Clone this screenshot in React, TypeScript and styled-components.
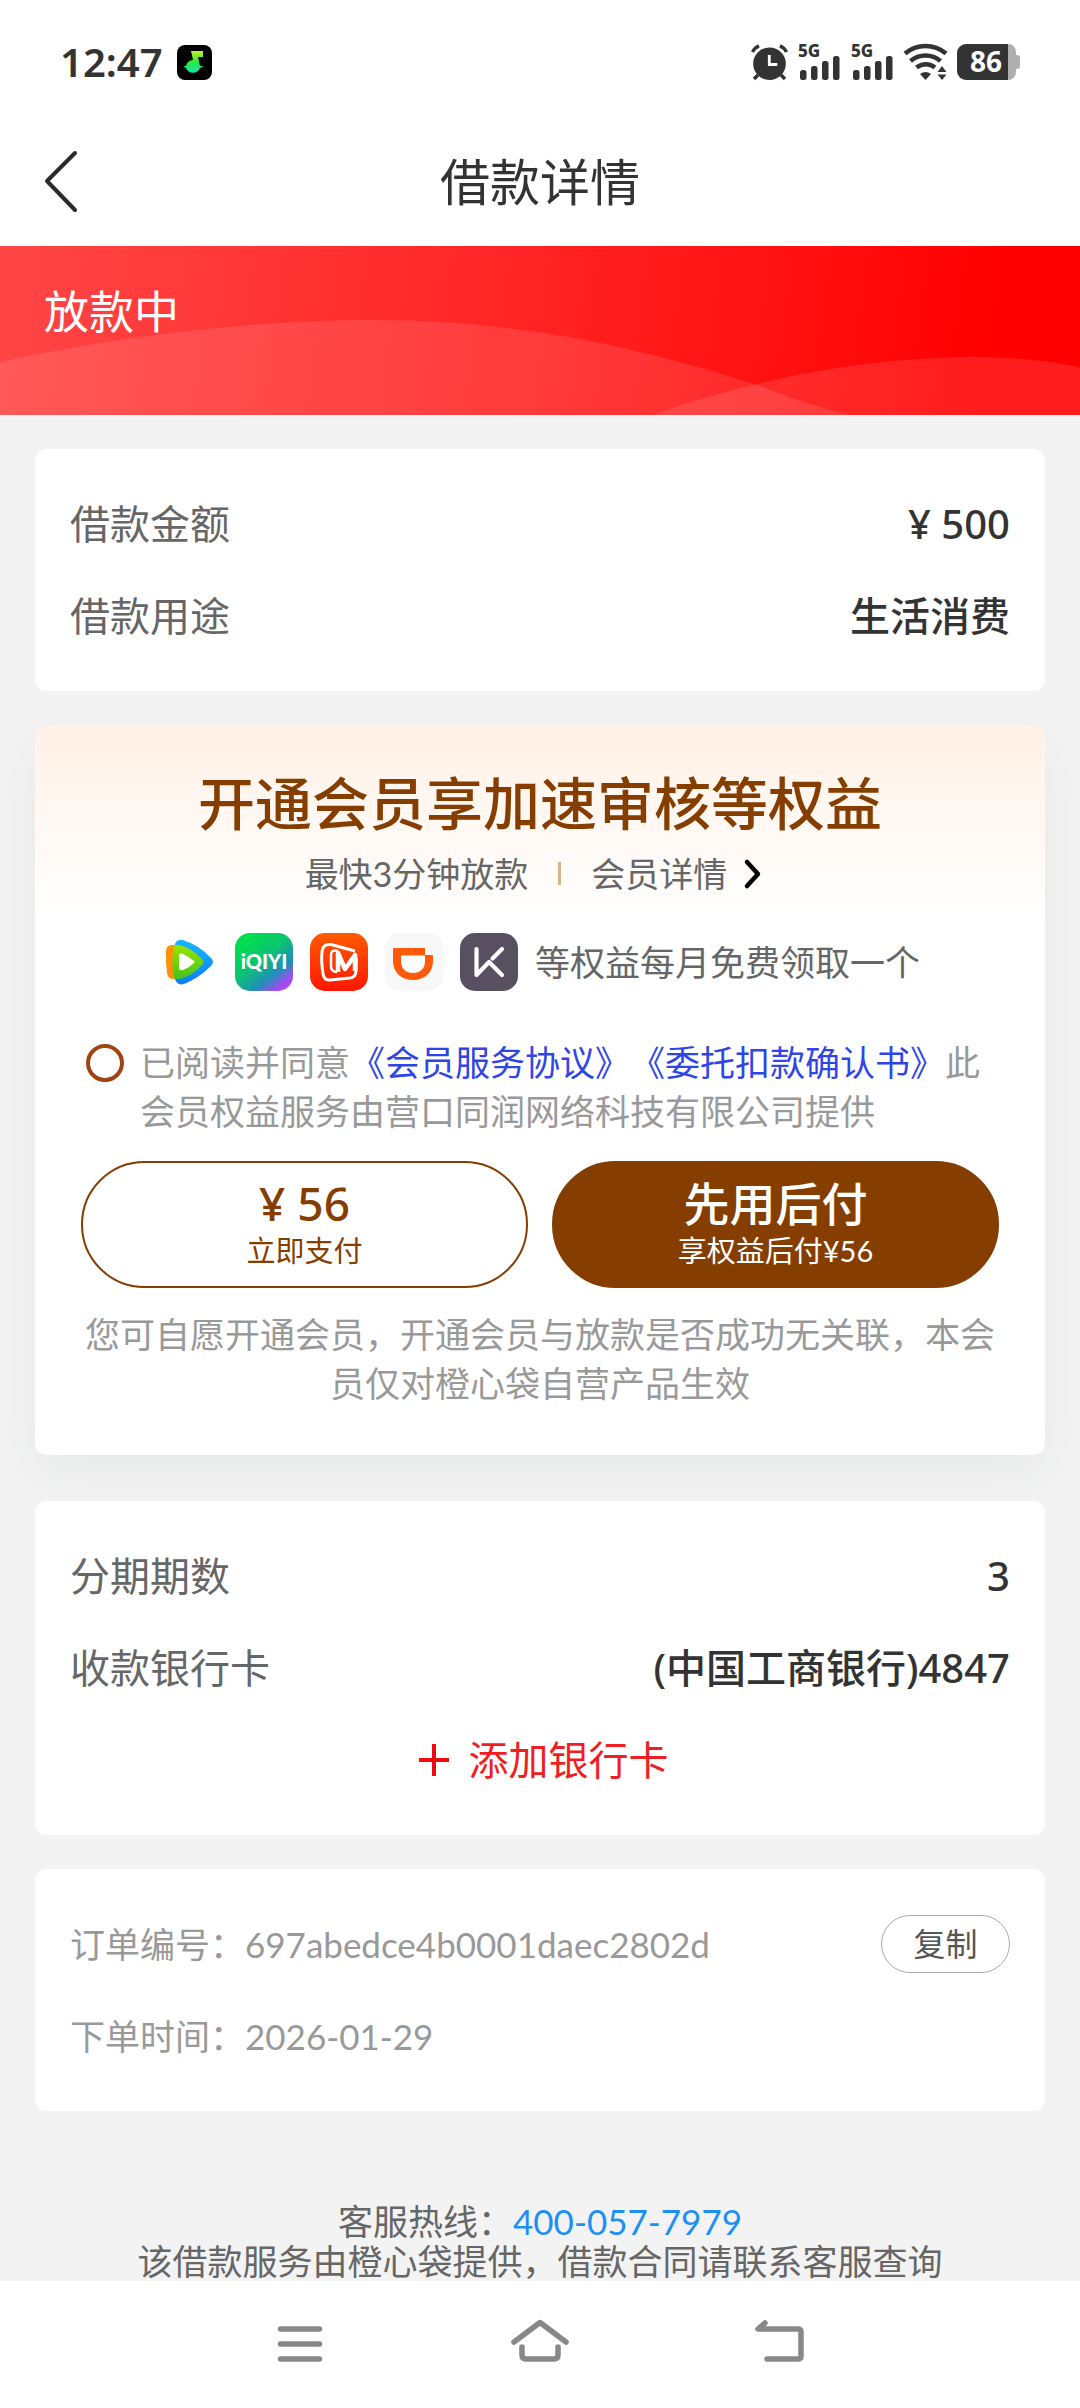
import React from "react";
import styled, { createGlobalStyle } from "styled-components";

const brown = "#853d00";
const mediumFont = '"Noto Sans", "Noto Sans CJK SC", sans-serif';

const GlobalStyle = createGlobalStyle`
  * {
    box-sizing: border-box;
  }
  body {
    margin: 0;
    background: #f3f3f3;
    color: #333;
    font-family: Lato, "Noto Sans CJK SC", sans-serif;
    font-size: 40px;
    text-spacing-trim: space-all;
  }
  button {
    font-family: inherit;
    margin: 0;
    padding: 0;
    border: 0;
    background: none;
    cursor: pointer;
  }
  a {
    text-decoration: none;
  }
  svg {
    display: block;
    flex: none;
    overflow: visible;
  }
`;

const Page = styled.div`
  display: flex;
  flex-direction: column;
  min-height: 100vh;
`;

/* ---------- status bar ---------- */

const StatusBar = styled.div`
  display: flex;
  align-items: center;
  justify-content: space-between;
  height: 124px;
  padding: 0 60px;
  background: #fff;
`;

const StatusGroup = styled.div<{ $gap: number }>`
  display: flex;
  align-items: center;
  gap: ${(p) => p.$gap}px;
`;

const Clock = styled.time`
  font-family: ${mediumFont};
  font-size: 40px;
  font-weight: 600;
  line-height: 48px;
`;

/* ---------- header ---------- */

const Header = styled.header`
  display: grid;
  grid-template-columns: 1fr auto 1fr;
  align-items: center;
  height: 122px;
  padding: 0 40px 6px;
  background: #fff;
`;

const BackButton = styled.button`
  display: flex;
  justify-self: start;
`;

const PageTitle = styled.h1`
  margin: 0;
  font-size: 50px;
  font-weight: 400;
  line-height: 60px;
`;

/* ---------- banner ---------- */

const Banner = styled.section`
  display: grid;
  height: 169px;
  background: linear-gradient(98deg, #ff4646 0%, #ff2424 48%, #ff0000 92%);

  > * {
    grid-area: 1 / 1;
  }
`;

const Waves = styled.svg`
  width: 100%;
  height: 169px;
  overflow: hidden;
`;

const BannerText = styled.p`
  margin: 0;
  padding: 36px 44px;
  color: #fff;
  font-size: 45px;
  line-height: 60px;
  z-index: 1;
`;

/* ---------- cards ---------- */

const Main = styled.main`
  display: flex;
  flex-direction: column;
  flex: 1;
  gap: 34px;
  padding: 34px 35px 0;
`;

const Card = styled.section`
  padding: 29px 35px;
  border-radius: 12px;
  background: #fff;
`;

const Row = styled.div`
  display: flex;
  align-items: center;
  justify-content: space-between;
  min-height: 92px;
  line-height: 60px;
`;

const Label = styled.span`
  color: #666;
`;

const Value = styled.span`
  font-family: ${mediumFont};
  font-weight: 500;
`;

const Meta = styled.span`
  color: #999;
  font-size: 35px;
`;

const AddCard = styled.button`
  display: flex;
  align-items: center;
  justify-content: center;
  gap: 20px;
  width: 100%;
  height: 92px;
  padding-left: 7px;
  color: #f01e23;
  font-size: 40px;
  line-height: 60px;
`;

const CopyButton = styled.button`
  width: 129px;
  height: 58px;
  border: 1px solid #aaa;
  border-radius: 29px;
  color: #555;
  font-size: 32px;
  line-height: 48px;
`;

/* ---------- membership ---------- */

const MemberCard = styled(Card)`
  margin-bottom: 12px;
  padding: 42px 46px 47px;
  background: linear-gradient(180deg, #fff1e6 0, #ffffff 190px);
  box-shadow: 0 18px 50px rgba(50, 60, 80, 0.06);
`;

const MemberTitle = styled.h2`
  margin: 0;
  color: ${brown};
  font-size: 57px;
  font-weight: 500;
  line-height: 72px;
  text-align: center;
`;

const MemberSub = styled.div`
  display: flex;
  align-items: center;
  justify-content: center;
  margin-top: 10px;
  padding-right: 12px;
  color: #666;
  font-size: 34px;
  line-height: 49px;
`;

const Divider = styled.span`
  width: 3px;
  height: 23px;
  margin: 0 30px;
  background: #d9b48f;
`;

const DetailLink = styled.a`
  display: flex;
  align-items: center;
  gap: 16px;
  color: #666;
`;

const Perks = styled.div`
  display: flex;
  align-items: center;
  justify-content: center;
  gap: 17px;
  margin-top: 35px;
  color: #666;
  font-size: 35px;
  line-height: 56px;
`;

const Agreement = styled.label`
  display: flex;
  align-items: flex-start;
  gap: 16px;
  margin-top: 47px;
  padding: 0 10px 0 5px;
  color: #999;
  font-size: 35px;
  line-height: 49px;

  a {
    color: #3046e4;
  }
`;

const Circle = styled.input`
  appearance: none;
  flex: none;
  width: 38px;
  height: 38px;
  margin: 6px 0 0;
  border: 4px solid #a04414;
  border-radius: 50%;
  background: #fff;

  &:checked {
    background: #a04414;
  }
`;

const PayRow = styled.div`
  display: grid;
  grid-template-columns: 1fr 1fr;
  gap: 24px;
  margin-top: 25px;
`;

const PayButton = styled.button<{ $filled?: boolean }>`
  display: flex;
  flex-direction: column;
  align-items: center;
  justify-content: center;
  height: 127px;
  padding-bottom: 4px;
  border: 2px solid ${brown};
  border-radius: 64px;
  background: ${(p) => (p.$filled ? brown : "#fff")};
  color: ${(p) => (p.$filled ? "#fff" : brown)};
`;

const PayMain = styled.span`
  font-family: ${mediumFont};
  font-size: 46px;
  font-weight: 500;
  line-height: 56px;
`;

const PaySub = styled.span`
  font-size: 29px;
  line-height: 40px;
`;

const Note = styled.p`
  margin: 22px 0 0;
  color: #999;
  font-size: 35px;
  line-height: 49px;
  text-align: center;
`;

/* ---------- footer and navigation ---------- */

const Footer = styled.footer`
  padding-top: 56px;
  color: #666;
  font-size: 35px;
  line-height: 40px;
  text-align: center;

  p {
    margin: 0;
  }
  a {
    color: #1e8ff5;
  }
`;

const SystemNav = styled.nav`
  display: flex;
  justify-content: center;
  gap: 180px;
  height: 127px;
  padding-top: 34px;
  background: #fff;
`;

const NavButton = styled.button`
  width: 60px;
  height: 56px;
`;

/* ---------- drawings ---------- */

const MusicAppIcon = () => (
  <svg width="35" height="35" viewBox="0 0 35 35">
    <defs>
      <linearGradient id="note" x1="0" y1="0" x2="0" y2="1">
        <stop offset="0" stopColor="#c6f02a" />
        <stop offset="0.5" stopColor="#2bea3c" />
        <stop offset="1" stopColor="#14e3b4" />
      </linearGradient>
    </defs>
    <rect width="35" height="35" rx="8" />
    <path
      d="M14 6h12v6h-5l2 9h4l-4 2a7.500 7.500 0 0 1-14 0l-3-2h3a8 8 0 0 1 7-6z"
      fill="url(#note)"
    />
  </svg>
);

const AlarmIcon = () => (
  <svg width="37" height="36" viewBox="0 0 37 36" fill="none" strokeWidth="3.500">
    <circle cx="18.500" cy="19.700" r="16.300" fill="#333" />
    <path d="M1.500 8C3 5 5 3 8 1.800M35.500 8C34 5 32 3 29 1.800M7 31l-4 4M30 31l4 4" stroke="#333" />
    <path d="M18.300 11v9.500h8" stroke="#fff" strokeWidth="2.800" />
  </svg>
);

const SignalIcon = () => (
  <svg width="43" height="36" viewBox="0 0 43 36" fill="#333">
    <text x="0" y="13" fontFamily="Noto Sans, sans-serif" fontSize="17" fontWeight="800">
      5G
    </text>
    <rect x="2" y="26" width="6.500" height="10" rx="2.500" />
    <rect x="13" y="22" width="6.500" height="14" rx="2.500" />
    <rect x="24" y="17" width="6.500" height="19" rx="2.500" />
    <rect x="35" y="12" width="6.500" height="24" rx="2.500" />
  </svg>
);

const WifiIcon = () => (
  <svg width="43" height="36" viewBox="0 0 43 36" fill="none" stroke="#333" strokeWidth="4.500">
    <path d="M1 9.500C13-.5 30-.5 42 9.500M6.500 17C15 9.500 28 9.500 36.500 17M12.500 23.500C18 19 26 19 31 23.500" />
    <path d="M16 30q5.500-4 11 0l-5.500 6z" fill="#333" stroke="none" />
    <path d="M33.500 28l4.500-6 4.500 6zM33.500 30.500l4.500 5.500 4.500-5.500z" fill="#333" stroke="none" />
  </svg>
);

const BatteryIcon = () => (
  <svg width="63" height="36" viewBox="0 0 63 36">
    <path d="M50 0h1a8 8 0 0 1 8 8v3h1a3 3 0 0 1 3 3v8a3 3 0 0 1-3 3h-1v3a8 8 0 0 1-8 8h-1z" fill="#aeaeae" />
    <path d="M9 0h42v36H9a9 9 0 0 1-9-9V9a9 9 0 0 1 9-9z" fill="#333" />
    <text
      x="29"
      y="28"
      textAnchor="middle"
      fontFamily="Noto Sans, sans-serif"
      fontSize="28"
      fontWeight="700"
      fill="#fff"
    >
      86
    </text>
  </svg>
);

const BackIcon = () => (
  <svg width="42" height="64" viewBox="0 0 42 64" fill="none" stroke="#2b2b2b" strokeWidth="4" strokeLinecap="round" strokeLinejoin="round">
    <path d="M35 3L7 31l28 29" />
  </svg>
);

const ChevronIcon = () => (
  <svg width="20" height="30" viewBox="0 0 20 30" fill="none" stroke="#000" strokeWidth="4.500" strokeLinecap="round" strokeLinejoin="round">
    <path d="M4 3l11 12L4 27" />
  </svg>
);

const PlusIcon = () => (
  <svg width="30" height="32" viewBox="0 0 30 32" stroke="#f00a10" strokeWidth="4">
    <path d="M15 0v32M0 16h30" />
  </svg>
);

const TencentIcon = () => (
  <svg width="58" height="58" viewBox="0 0 58 58">
    <defs>
      <linearGradient id="tvGreen" x1="0" y1="0" x2="0" y2="1">
        <stop offset="0" stopColor="#9be400" />
        <stop offset="1" stopColor="#43c41c" />
      </linearGradient>
      <linearGradient id="tvBlue" x1="0" y1="0" x2="0" y2="1">
        <stop offset="0" stopColor="#18b8ff" />
        <stop offset="1" stopColor="#0a7dff" />
      </linearGradient>
    </defs>
    <path d="M6 18q0-6 6-6h6v34h-5q-5 0-6-6-1.500-11-1-22z" fill="#ff920a" />
    <path d="M15 11q2-5 8-4 16 5 28 18 4 4 0 8-12 12-27 18-7 2-9-5z" fill="url(#tvBlue)" />
    <path d="M13 16q0-5 6-4 13 3 23 14 3 3 0 6-10 11-22 14-6 1-7-5-1-12 0-25z" fill="url(#tvGreen)" />
    <path d="M19 23q0-4 4-2 6 3 11 7 1 1 0 2-5 5-11 7-4 1-4-2z" fill="#fff" />
  </svg>
);

const IqiyiIcon = () => (
  <svg width="58" height="58" viewBox="0 0 58 58">
    <defs>
      <linearGradient id="iq" x1="0.250" y1="0.100" x2="0.950" y2="1">
        <stop offset="0" stopColor="#00dc50" />
        <stop offset="0.350" stopColor="#0cc373" />
        <stop offset="0.650" stopColor="#1f8fb8" />
        <stop offset="0.850" stopColor="#a34cf0" />
        <stop offset="1" stopColor="#c43cff" />
      </linearGradient>
    </defs>
    <rect width="58" height="58" rx="15" fill="url(#iq)" />
    <text x="29" y="36" textAnchor="middle" fontFamily="Lato, sans-serif" fontSize="20" fontWeight="900" fill="#fff">
      iQIYI
    </text>
  </svg>
);

const MangoIcon = () => (
  <svg width="58" height="58" viewBox="0 0 58 58" fill="none" stroke="#fff" strokeLinejoin="round">
    <defs>
      <linearGradient id="mg" x1="0" y1="0" x2="0" y2="1">
        <stop offset="0" stopColor="#ff5a00" />
        <stop offset="1" stopColor="#ff1800" />
      </linearGradient>
    </defs>
    <rect width="58" height="58" rx="15" fill="url(#mg)" stroke="none" />
    <path d="M45 18L21 11.500q-8-1-9 7-1 10 1 22 1 7 7 6.500l20-2q6-1 6-7l.5-13" strokeWidth="3" />
    <path d="M28 18q-7-2-7 4v11q0 6 6 6" strokeWidth="2.500" />
    <path d="M28 39V20l7 16L45 22v16" strokeWidth="4.500" />
  </svg>
);

const DidiIcon = () => (
  <svg width="58" height="58" viewBox="0 0 58 58">
    <rect width="58" height="58" rx="15" fill="#f8f8f8" />
    <path d="M9 15h31v7h7q1 0 1 1v5c0 12-9 19-20 19S8 40 8 28V16q0-1 1-1z" fill="#ff5a0a" />
    <path d="M16 22.500h24V28c0 8-5 12-12 12s-12-4-12-12z" fill="#fff" />
  </svg>
);

const KeepIcon = () => (
  <svg width="58" height="58" viewBox="0 0 58 58" fill="none" stroke="#fff" strokeWidth="4.200" strokeLinecap="round" strokeLinejoin="round">
    <rect width="58" height="58" rx="15" fill="#584f60" stroke="none" />
    <path d="M16.500 16v26L29 29l13 13M32.500 25.500L42 16" />
  </svg>
);

const MenuIcon = () => (
  <svg width="60" height="56" viewBox="0 0 60 56" stroke="#888" strokeWidth="5.500" strokeLinecap="round">
    <path d="M10.500 14h39M10.500 29h39M10.500 44h39" />
  </svg>
);

const HomeIcon = () => (
  <svg width="60" height="56" viewBox="0 0 60 56" fill="none" stroke="#888" strokeWidth="5.500" strokeLinecap="round" strokeLinejoin="round">
    <path d="M4 27L30 7.500 56 27M12 32v8q0 4 4 4h28q4 0 4-4v-8" />
  </svg>
);

const ReturnIcon = () => (
  <svg width="60" height="56" viewBox="0 0 60 56" fill="none" stroke="#888" strokeWidth="5.500" strokeLinecap="round" strokeLinejoin="round">
    <path d="M15 8l-7 6h40q3 0 3 3v24q0 3-3 3H17" />
  </svg>
);

const loan = [
  { label: "借款金额", value: "¥ 500" },
  { label: "借款用途", value: "生活消费" },
];

const repayment = [
  { label: "分期期数", value: "3" },
  { label: "收款银行卡", value: "(中国工商银行)4847" },
];

function Rows({ items }: { items: { label: string; value: string }[] }) {
  return (
    <>
      {items.map((item) => (
        <Row key={item.label}>
          <Label>{item.label}</Label>
          <Value>{item.value}</Value>
        </Row>
      ))}
    </>
  );
}

export default function App() {
  return (
    <Page>
      <GlobalStyle />
      <StatusBar>
        <StatusGroup $gap={14}>
          <Clock>12:47</Clock>
          <MusicAppIcon />
        </StatusGroup>
        <StatusGroup $gap={10}>
          <AlarmIcon />
          <SignalIcon />
          <SignalIcon />
          <WifiIcon />
          <BatteryIcon />
        </StatusGroup>
      </StatusBar>

      <Header>
        <BackButton aria-label="返回">
          <BackIcon />
        </BackButton>
        <PageTitle>借款详情</PageTitle>
      </Header>

      <Banner>
        <Waves viewBox="0 0 1080 169" preserveAspectRatio="none" fill="#fff" fillOpacity="0.110">
          <path d="M0 116C120 90 250 74 372 74c150 0 270 28 388 66q50 20 90 29H0z" />
          <path d="M653 169c107-38 217-58 321-58q56 0 106 10v48z" />
        </Waves>
        <BannerText>放款中</BannerText>
      </Banner>

      <Main>
        <Card>
          <Rows items={loan} />
        </Card>

        <MemberCard>
          <MemberTitle>开通会员享加速审核等权益</MemberTitle>
          <MemberSub>
            <span>最快3分钟放款</span>
            <Divider />
            <DetailLink href="#member">
              会员详情
              <ChevronIcon />
            </DetailLink>
          </MemberSub>
          <Perks>
            <TencentIcon />
            <IqiyiIcon />
            <MangoIcon />
            <DidiIcon />
            <KeepIcon />
            <span>等权益每月免费领取一个</span>
          </Perks>
          <Agreement>
            <Circle type="checkbox" />
            <span>
              已阅读并同意<a href="#service">《会员服务协议》</a>
              <a href="#debit">《委托扣款确认书》</a>此会员权益服务由营口同润网络科技有限公司提供
            </span>
          </Agreement>
          <PayRow>
            <PayButton>
              <PayMain>¥ 56</PayMain>
              <PaySub>立即支付</PaySub>
            </PayButton>
            <PayButton $filled>
              <PayMain>先用后付</PayMain>
              <PaySub>享权益后付¥56</PaySub>
            </PayButton>
          </PayRow>
          <Note>您可自愿开通会员，开通会员与放款是否成功无关联，本会员仅对橙心袋自营产品生效</Note>
        </MemberCard>

        <Card>
          <Rows items={repayment} />
          <AddCard>
            <PlusIcon />
            添加银行卡
          </AddCard>
        </Card>

        <Card>
          <Row>
            <Meta>订单编号：697abedce4b0001daec2802d</Meta>
            <CopyButton>复制</CopyButton>
          </Row>
          <Row>
            <Meta>下单时间：2026-01-29</Meta>
          </Row>
        </Card>

        <Footer>
          <p>
            客服热线：<a href="tel:400-057-7979">400-057-7979</a>
          </p>
          <p>该借款服务由橙心袋提供，借款合同请联系客服查询</p>
        </Footer>
      </Main>

      <SystemNav>
        <NavButton aria-label="菜单">
          <MenuIcon />
        </NavButton>
        <NavButton aria-label="主页">
          <HomeIcon />
        </NavButton>
        <NavButton aria-label="后退">
          <ReturnIcon />
        </NavButton>
      </SystemNav>
    </Page>
  );
}
